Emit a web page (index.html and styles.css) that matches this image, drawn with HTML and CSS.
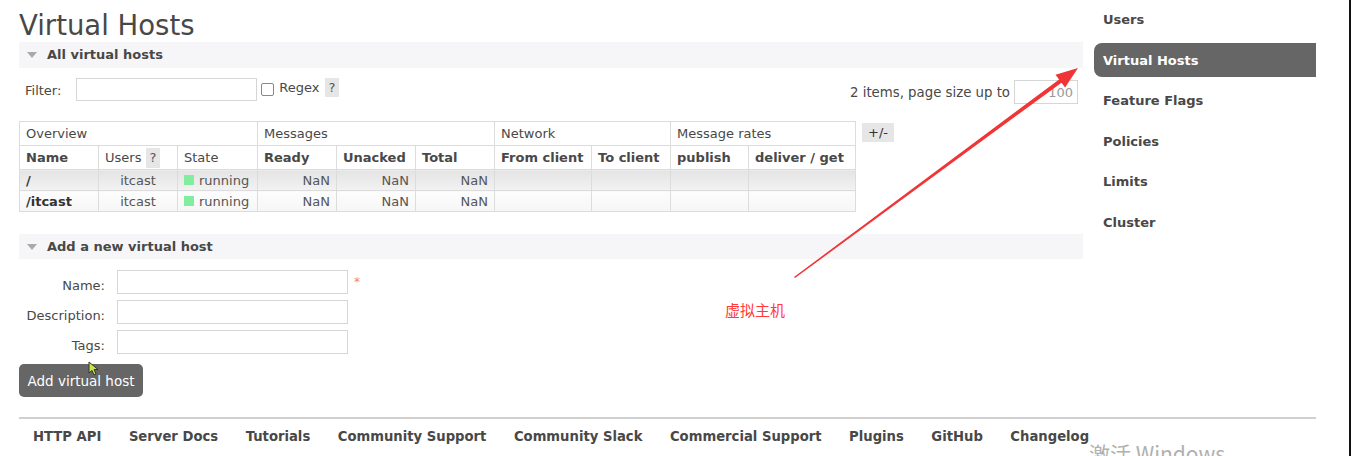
FILE: index.html
```html
<!DOCTYPE html>
<html>
<head>
<meta charset="UTF-8">
<meta name="viewport" content="width=device-width, initial-scale=1.0">
<title>RabbitMQ Management - Virtual Hosts</title>
<link rel="stylesheet" href="styles.css">
</head>
<body>

<div class="page">
    <div class="top">
        <div class="main">
            <h1 class="page-title">Virtual Hosts</h1>

            <div class="section-head"><span class="tri"></span>All virtual hosts</div>

            <div class="filter-row">
                <div class="filter-left">
                    <label class="filter-label">Filter:</label>
                    <input class="text-input filter-input" type="text">
                    <span class="checkbox"></span>
                    <span class="regex">Regex</span>
                    <span class="help">?</span>
                </div>
                <div class="filter-right">
                    <span>2 items, page size up to</span>
                    <input class="text-input page-size" type="text" value="100">
                </div>
            </div>

            <div class="table-wrap">
                <table class="list">
                    <colgroup>
                        <col class="c79"><col class="c79"><col class="c80">
                        <col class="c79"><col class="c79"><col class="c79">
                        <col class="c97"><col class="c79">
                        <col class="c78"><col class="c107">
                    </colgroup>
                    <thead>
                        <tr class="group-row">
                            <th colspan="3">Overview</th>
                            <th colspan="3">Messages</th>
                            <th colspan="2">Network</th>
                            <th colspan="2">Message rates</th>
                        </tr>
                        <tr class="col-row">
                            <th>Name</th>
                            <th class="normal">Users <span class="help">?</span></th>
                            <th class="normal">State</th>
                            <th>Ready</th>
                            <th>Unacked</th>
                            <th>Total</th>
                            <th>From client</th>
                            <th>To client</th>
                            <th>publish</th>
                            <th>deliver / get</th>
                        </tr>
                    </thead>
                    <tbody>
                        <tr class="alt1">
                            <td class="name">/</td>
                            <td class="c">itcast</td>
                            <td><span class="state-box"></span>running</td>
                            <td class="r">NaN</td>
                            <td class="r">NaN</td>
                            <td class="r">NaN</td>
                            <td></td><td></td><td></td><td></td>
                        </tr>
                        <tr class="alt2">
                            <td class="name">/itcast</td>
                            <td class="c">itcast</td>
                            <td><span class="state-box"></span>running</td>
                            <td class="r">NaN</td>
                            <td class="r">NaN</td>
                            <td class="r">NaN</td>
                            <td></td><td></td><td></td><td></td>
                        </tr>
                    </tbody>
                </table>
                <span class="toggle">+/-</span>
            </div>

            <div class="section-head second"><span class="tri"></span>Add a new virtual host</div>

            <div class="form">
                <label class="form-label">Name:</label>
                <input class="text-input" type="text">
                <span class="mand">*</span>
                <label class="form-label">Description:</label>
                <input class="text-input" type="text">
                <span></span>
                <label class="form-label">Tags:</label>
                <input class="text-input" type="text">
                <span></span>
            </div>
            <button class="btn">Add virtual host</button>
        </div>

        <ul class="sidebar">
            <li>Users</li>
            <li class="selected">Virtual Hosts</li>
            <li>Feature Flags</li>
            <li>Policies</li>
            <li>Limits</li>
            <li>Cluster</li>
        </ul>
    </div>

    <div class="footer">
        <a href="#">HTTP API</a>
        <a href="#">Server Docs</a>
        <a href="#">Tutorials</a>
        <a href="#">Community Support</a>
        <a href="#">Community Slack</a>
        <a href="#">Commercial Support</a>
        <a href="#">Plugins</a>
        <a href="#">GitHub</a>
        <a href="#">Changelog</a>
    </div>
</div>

<!-- annotation drawn over the screenshot -->
<svg class="arrow" width="1351" height="456" viewBox="0 0 1351 456">
    <polygon points="795,278 1061.5,82.7 1065.1,87.5 1078,68 1055.5,74.7 1059.1,79.5 794,277" fill="#ef3535"/>
</svg>
<div class="note">虚拟主机</div>

<svg class="cursor" width="12" height="16" viewBox="0 0 12 16">
    <polygon points="1,1 1,12 4,9.5 6,14 8,13 6,8.5 10,8.5" fill="#c9e34a" stroke="#333" stroke-width="1"/>
</svg>

<div class="watermark">激活 Windows</div>

</body>
</html>
```

FILE: styles.css
```css
html, body {
    margin: 0;
    padding: 0;
    background-color: #fff;
}

body {
    font-family: "DejaVu Sans", Verdana, sans-serif;
    font-size: 13px;
    color: #484848;
    height: 100vh;
    overflow: hidden;
    box-sizing: border-box;
    border-right: 2px solid #111;
    position: relative;
}

.page {
    padding-left: 19px;
}

.top {
    display: flex;
    align-items: flex-start;
}

.main {
    width: 1064px;
}

.page-title {
    margin: 0;
    padding-top: 10px;
    font-size: 27.5px;
    font-weight: normal;
    line-height: 30px;
    color: #484848;
}

.section-head {
    margin-top: 2px;
    height: 26px;
    line-height: 26px;
    background-color: #f6f6f8;
    font-weight: bold;
    font-size: 13px;
    display: flex;
    align-items: center;
}

.section-head.second {
    margin-top: 22px;
    height: 25px;
}

.tri {
    width: 0;
    height: 0;
    border-left: 5px solid transparent;
    border-right: 5px solid transparent;
    border-top: 6px solid #aaa;
    margin-left: 8px;
    margin-right: 10px;
}

.filter-row {
    margin-top: 10px;
    height: 25px;
    display: flex;
    justify-content: space-between;
    align-items: flex-start;
}

.filter-left {
    display: flex;
    align-items: center;
    padding-left: 6px;
}

.filter-label {
    margin-right: 15px;
    position: relative;
    top: 1px;
}

.text-input {
    box-sizing: border-box;
    border: 1px solid #d6d6d6;
    height: 24px;
    margin: 0;
    padding: 2px 4px;
    font-family: "DejaVu Sans", Verdana, sans-serif;
    font-size: 13px;
    color: #888;
    background: #fff;
    outline: none;
}

.filter-input {
    width: 181px;
    height: 23px;
}

.checkbox {
    display: inline-block;
    width: 11px;
    height: 11px;
    border: 1px solid #888;
    border-radius: 2px;
    margin-left: 4px;
    margin-right: 5px;
}

.regex {
    margin-right: 5px;
    position: relative;
    top: -2px;
}

.help {
    display: inline-block;
    background-color: #e6e6e6;
    color: #555;
    padding: 1px 4px;
    line-height: 17px;
}

.filter-left .help {
    position: relative;
    top: -2px;
}

.filter-right {
    display: flex;
    align-items: center;
    padding-top: 2px;
    padding-right: 5px;
    font-size: 13.3px;
}

.page-size {
    width: 64px;
    margin-left: 4px;
    text-align: right;
    color: #999;
}

.table-wrap {
    margin-top: 18px;
    display: flex;
    align-items: flex-start;
}

.list {
    border-collapse: collapse;
    table-layout: fixed;
    width: 836px;
    border: 1px solid #d8d8d8;
}

.c78 { width: 78px; }
.c79 { width: 79px; }
.c80 { width: 80px; }
.c97 { width: 97px; }
.c107 { width: 107px; }

.list th, .list td {
    border: 1px solid #dcdcdc;
    padding: 0 6px;
    text-align: left;
    white-space: nowrap;
    overflow: hidden;
}

.group-row th {
    font-weight: normal;
    height: 23px;
}

.col-row th {
    font-weight: bold;
    height: 23px;
    border-bottom: none;
}

.col-row th.normal {
    font-weight: normal;
}

.col-row .help {
    padding: 0 4px;
    line-height: 20px;
}

.list td {
    color: #555;
    height: 20px;
}

.list td.name {
    font-weight: bold;
    color: #333;
}

.list td.c { text-align: center; }
.list td.r { text-align: right; }

.alt1 td {
    background: linear-gradient(#e4e4e4, #f2f2f2);
}

.alt2 td {
    background: linear-gradient(#fdfdfd, #f6f6f6);
}

.state-box {
    display: inline-block;
    width: 10px;
    height: 10px;
    background-color: #80ee9e;
    margin-right: 5px;
}

.toggle {
    margin-left: 6px;
    margin-top: 2px;
    background-color: #e6e6e6;
    padding: 0 6px;
    line-height: 19px;
    color: #333;
}

.form {
    margin-top: 11px;
    display: grid;
    grid-template-columns: 86px 231px auto;
    column-gap: 12px;
    row-gap: 6px;
    align-items: center;
}

.form-label {
    text-align: right;
    margin-top: 6px;
}

.mand {
    color: #f08080;
    font-size: 12px;
    align-self: start;
    margin-left: -6px;
    margin-top: 5px;
}

.btn {
    margin-top: 10px;
    height: 33px;
    background-color: #666;
    color: #fff;
    border: none;
    border-radius: 5px;
    padding: 0 8px;
    font-family: "DejaVu Sans", Verdana, sans-serif;
    font-size: 13.5px;
    width: 124px;
}

.sidebar {
    list-style: none;
    margin: 0 0 0 11px;
    padding: 2px 0 0 0;
    width: 222px;
}

.sidebar li {
    height: 34px;
    line-height: 35px;
    margin-bottom: 6.6px;
    padding-left: 9px;
    font-weight: bold;
    color: #484848;
}

.sidebar li.selected {
    background-color: #666;
    color: #fff;
    border-radius: 8px 0 0 8px;
}

.footer {
    margin-top: 20px;
    width: 1297px;
    border-top: 2px solid #d0d0d0;
    display: flex;
    gap: 27.5px;
    padding: 9px 0 0 14px;
    box-sizing: border-box;
}

.footer a {
    color: #484848;
    font-weight: bold;
    font-size: 13.2px;
    text-decoration: none;
    line-height: 18px;
}

.arrow {
    position: absolute;
    left: 0;
    top: 0;
}

.note {
    position: absolute;
    left: 725px;
    top: 300px;
    color: #ff3a3a;
    font-family: "Noto Sans CJK SC", sans-serif;
    font-size: 15px;
    line-height: 20px;
}

.cursor {
    position: absolute;
    left: 88px;
    top: 361px;
}

.watermark {
    position: absolute;
    left: 1089px;
    top: 440px;
    color: #b0b0b0;
    font-family: "Noto Sans CJK SC", sans-serif;
    font-size: 21px;
    line-height: 26px;
}
```
